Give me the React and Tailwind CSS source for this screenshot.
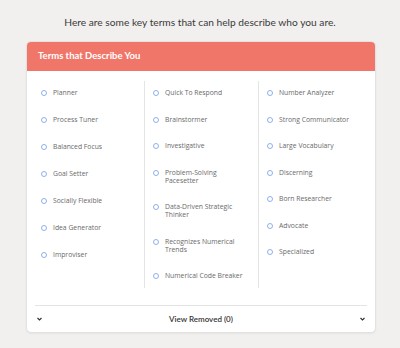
import React from "react";

const cols = [
  ["Planner", "Process Tuner", "Balanced Focus", "Goal Setter", "Socially Flexible", "Idea Generator", "Improviser"],
  ["Quick To Respond", "Brainstormer", "Investigative", "Problem-Solving Pacesetter", "Data-Driven Strategic Thinker", "Recognizes Numerical Trends", "Numerical Code Breaker"],
  ["Number Analyzer", "Strong Communicator", "Large Vocabulary", "Discerning", "Born Researcher", "Advocate", "Specialized"],
];

const widths = ["w-[100px]", "w-[78px]", "w-[96px]"];

function Item({ label, w }) {
  return (
    <div className="flex items-start gap-[6px]">
      <span className="mt-[1px] w-[6px] h-[6px] shrink-0 rounded-full border border-[#8fb1ee]" />
      <span className={`${w} text-[6.8px] leading-[8px] text-[#6a6a6a]`} style={{ fontFamily: '"Open Sans", sans-serif' }}>
        {label}
      </span>
    </div>
  );
}

function Chevron() {
  return (
    <svg width="5" height="4" viewBox="0 0 5 4">
      <path d="M0.5 1 L2.5 3 L4.5 1" stroke="#333" strokeWidth="1.2" fill="none" />
    </svg>
  );
}

export default function App() {
  return (
    <div className="w-[400px] h-[348px] bg-[#f1f0ee] pt-[15px]" style={{ fontFamily: 'Lato, sans-serif' }}>
      <p className="text-center text-[10.2px] leading-[14px] text-[#3a3a3a]">
        Here are some key terms that can help describe who you are.
      </p>
      <div className="ml-[26px] mt-[12px] w-[350px] bg-white rounded-[5px] border border-[#e2e2e2] shadow-[0_1px_2px_rgba(0,0,0,0.05)]">
        <div className="h-[29px] bg-[#ef7669] rounded-t-[4px] flex items-center pl-[11px]">
          <span className="text-white text-[9.5px] font-bold">Terms that Describe You</span>
        </div>
        <div className="flex pl-[4px] pt-[10px]">
          {cols.map((col, i) => (
            <div
              key={i}
              className={
                i === 0
                  ? "w-[113px] pl-[10px] pt-[8px] pb-[8px] flex flex-col gap-[19px]"
                  : "w-[114px] border-l border-[#e4e4e4] pl-[8px] pt-[8px] pb-[8px] flex flex-col gap-[18.5px]"
              }
            >
              {col.map((t) => (
                <Item key={t} label={t} w={widths[i]} />
              ))}
            </div>
          ))}
        </div>
        <div className="mx-[8px] mt-[17px] border-t border-[#e4e4e4] h-[27px] flex items-center justify-between px-[2px]">
          <Chevron />
          <span className="text-[8px] text-[#333] font-semibold">View Removed (0)</span>
          <Chevron />
        </div>
      </div>
    </div>
  );
}
